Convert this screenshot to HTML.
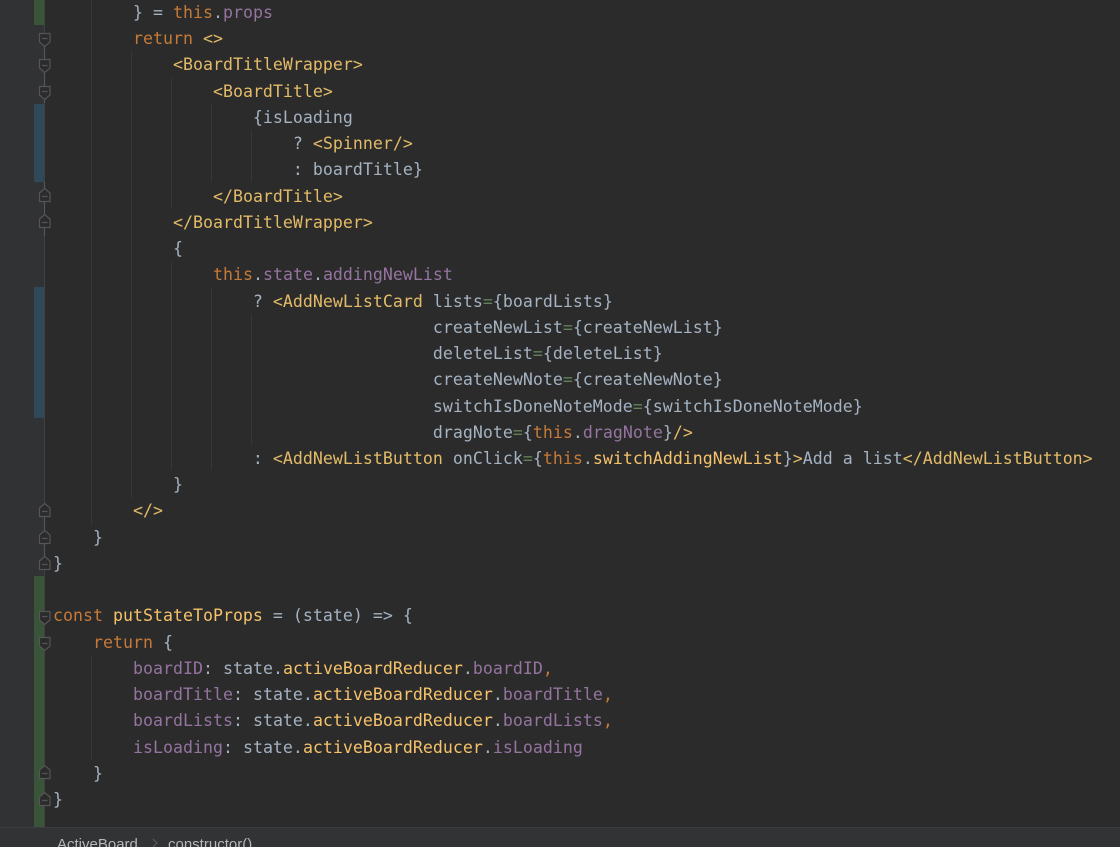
<!DOCTYPE html>
<html><head><meta charset="utf-8"><style>
html,body{margin:0;padding:0;background:#2b2b2b;width:1120px;height:847px;overflow:hidden}
.a{position:absolute}
pre{position:absolute;left:53px;top:0;margin:0;font:16.6px/26.23px "DejaVu Sans Mono","Liberation Mono",monospace;color:#a4b2c1;letter-spacing:0.006px;filter:blur(.3px)}
.k{color:#c67a38}.t{color:#e3bb68}.p{color:#94749f}.y{color:#f5c26b}.g{color:#62805a}
.i{position:absolute;width:1px;background:#373737}
svg{position:absolute;left:0;top:0}
</style></head><body>
<div class="a" style="left:0;top:0;width:44px;height:827px;background:#303234"></div>
<div class="a" style="left:34px;top:0;width:10px;height:25px;background:#3a5439"></div>
<div class="a" style="left:34px;top:104px;width:10px;height:78px;background:#30495a"></div>
<div class="a" style="left:34px;top:287px;width:10px;height:131px;background:#30495a"></div>
<div class="a" style="left:34px;top:576px;width:10px;height:251px;background:#3a5439"></div>
<div class="a" style="left:44px;top:0;width:1px;height:827px;background:#3f4041"></div>
<div class="i" style="left:91px;top:0;height:525px"></div>
<div class="i" style="left:91px;top:655px;height:105px"></div>
<div class="i" style="left:131px;top:52px;height:446px"></div>
<div class="i" style="left:171px;top:78px;height:130px"></div>
<div class="i" style="left:171px;top:262px;height:208px"></div>
<div class="i" style="left:211px;top:104px;height:78px"></div>
<div class="i" style="left:211px;top:288px;height:182px"></div>
<div class="i" style="left:251px;top:130px;height:52px"></div>
<div class="i" style="left:251px;top:314px;height:131px"></div>
<svg width="60" height="827" fill="#2b2b2b" stroke="#555" stroke-width="1.2">
<path d="M44.5 46V60M44.5 72V86M44.5 98V103M44.5 182V188M44.5 201V214M44.5 227V236M44.5 516V530M44.5 543V556" fill="none"/>
<path d="M39.500 33.500H50V42L44.700 46.500L39.500 42ZM42 38.500H47.500"/>
<path d="M39.500 59.500H50V68L44.700 72.500L39.500 68ZM42 65.500H47.500"/>
<path d="M39.500 86.500H50V95L44.700 99.500L39.500 95ZM42 91.500H47.500"/>
<path d="M39.500 201.500H50V193L44.700 188.500L39.500 193ZM42 196.500H47.500"/>
<path d="M39.500 227.500H50V219L44.700 214.500L39.500 219ZM42 222.500H47.500"/>
<path d="M39.500 516.500H50V508L44.700 503.500L39.500 508ZM42 511.500H47.500"/>
<path d="M39.500 543.500H50V535L44.700 530.500L39.500 535ZM42 538.500H47.500"/>
<path d="M39.500 569.500H50V561L44.700 556.500L39.500 561ZM42 564.500H47.500"/>
<path d="M39.500 611.500H50V620L44.700 624.500L39.500 620ZM42 616.500H47.500"/>
<path d="M39.500 637.500H50V646L44.700 650.500L39.500 646ZM42 643.500H47.500"/>
<path d="M39.500 778.500H50V770L44.700 765.500L39.500 770ZM42 773.500H47.500"/>
<path d="M39.500 805.500H50V797L44.700 792.500L39.500 797ZM42 800.500H47.500"/>
</svg>
<pre>        } = <span class="k">this</span>.<span class="p">props</span>
        <span class="k">return</span> <span class="t">&lt;&gt;</span>
            <span class="t">&lt;BoardTitleWrapper&gt;</span>
                <span class="t">&lt;BoardTitle&gt;</span>
                    {isLoading
                        ? <span class="t">&lt;Spinner/&gt;</span>
                        : boardTitle}
                <span class="t">&lt;/BoardTitle&gt;</span>
            <span class="t">&lt;/BoardTitleWrapper&gt;</span>
            {
                <span class="k">this</span>.<span class="p">state</span>.<span class="p">addingNewList</span>
                    ? <span class="t">&lt;AddNewListCard</span> lists<span class="g">=</span>{boardLists}
                                      createNewList<span class="g">=</span>{createNewList}
                                      deleteList<span class="g">=</span>{deleteList}
                                      createNewNote<span class="g">=</span>{createNewNote}
                                      switchIsDoneNoteMode<span class="g">=</span>{switchIsDoneNoteMode}
                                      dragNote<span class="g">=</span>{<span class="k">this</span>.<span class="p">dragNote</span>}<span class="t">/&gt;</span>
                    : <span class="t">&lt;AddNewListButton</span> onClick<span class="g">=</span>{<span class="k">this</span>.<span class="y">switchAddingNewList</span>}<span class="t">&gt;</span>Add a list<span class="t">&lt;/AddNewListButton&gt;</span>
            }
        <span class="t">&lt;/&gt;</span>
    }
}

<span class="k">const</span> <span class="y">putStateToProps</span> = (state) =&gt; {
    <span class="k">return</span> {
        <span class="p">boardID</span>: state.<span class="y">activeBoardReducer</span>.<span class="p">boardID</span><span class="k">,</span>
        <span class="p">boardTitle</span>: state.<span class="y">activeBoardReducer</span>.<span class="p">boardTitle</span><span class="k">,</span>
        <span class="p">boardLists</span>: state.<span class="y">activeBoardReducer</span>.<span class="p">boardLists</span><span class="k">,</span>
        <span class="p">isLoading</span>: state.<span class="y">activeBoardReducer</span>.<span class="p">isLoading</span>
    }
}</pre>
<div class="a" style="left:0;top:827px;width:1120px;height:20px;background:#313335;border-top:1px solid #3a3c3e;box-sizing:border-box;overflow:hidden;font:15px/34px 'Liberation Sans',sans-serif;color:#b4b8bb">
<span class="a" style="left:57px;top:0">ActiveBoard</span>
<svg width="10" height="12" style="left:151px;top:10px"><path d="M2 1L6 5L2 9" fill="none" stroke="#5f5f5f" stroke-width="1"/></svg>
<span class="a" style="left:168px;top:0">constructor()</span>
</div>
</body></html>
